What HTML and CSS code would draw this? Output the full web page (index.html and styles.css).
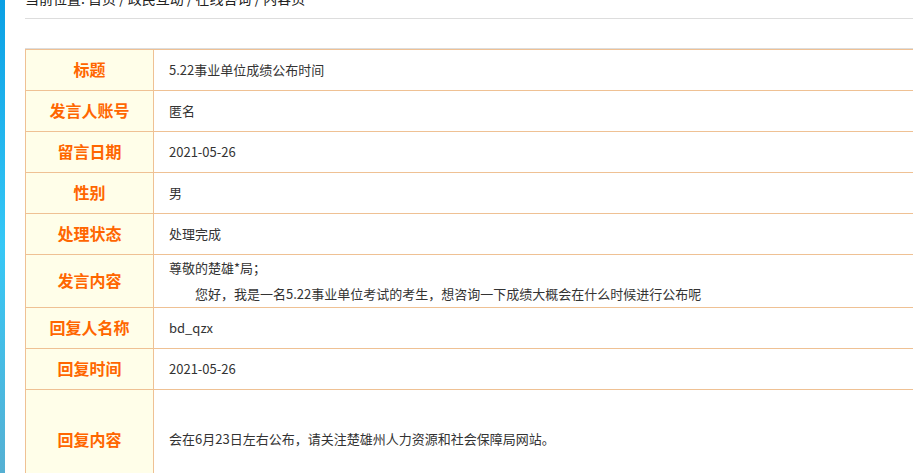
FILE: index.html
```html
<!DOCTYPE html>
<html lang="zh-CN">
<head>
<meta charset="utf-8">
<title>内容页</title>
<link rel="stylesheet" href="styles.css">
</head>
<body>
<div class="page">
  <div class="sidebar"></div>
  <div class="main">
    <div class="crumb">当前位置: 首页 / 政民互动 / 在线咨询 / 内容页</div>
    <div class="content">
      <table class="detail">
        <tr><th>标题</th><td>5.22事业单位成绩公布时间</td></tr>
        <tr><th>发言人账号</th><td>匿名</td></tr>
        <tr><th>留言日期</th><td>2021-05-26</td></tr>
        <tr><th>性别</th><td>男</td></tr>
        <tr><th>处理状态</th><td>处理完成</td></tr>
        <tr><th>发言内容</th><td class="multi"><p>尊敬的楚雄*局；</p><p class="indent">您好，我是一名5.22事业单位考试的考生，想咨询一下成绩大概会在什么时候进行公布呢</p></td></tr>
        <tr><th>回复人名称</th><td>bd_qzx</td></tr>
        <tr><th>回复时间</th><td>2021-05-26</td></tr>
        <tr class="tall"><th>回复内容</th><td>会在6月23日左右公布，请关注楚雄州人力资源和社会保障局网站。</td></tr>
      </table>
    </div>
  </div>
</div>
</body>
</html>
```

FILE: styles.css
```css
html, body {
  margin: 0;
  padding: 0;
  overflow: hidden;
  background: #fff;
}
body {
  font-family: "Noto Sans CJK SC", "Liberation Sans", sans-serif;
  color: #333;
}
.page {
  display: flex;
  width: 1100px;
  min-height: 100vh;
}
.sidebar {
  width: 5px;
  flex: none;
  background: linear-gradient(#0a9fe4, #36c7f6 50%, #58aed0);
}
.main {
  flex: 1;
  padding-left: 20px;
  margin-top: -12px;
}
.crumb {
  font-size: 14px;
  line-height: 20px;
  color: #222;
  padding-bottom: 10px;
  border-bottom: 1px solid #ddd;
}
.content {
  margin-top: 29px;
  border-top: 1px solid #ddd;
}
.detail {
  width: 100%;
  border-collapse: collapse;
}
.detail th,
.detail td {
  border: 1px solid #efc194;
  height: 38px;
  padding: 0 0 2px;
  vertical-align: middle;
}
.detail th {
  width: 127px;
  background: #fffee9;
  color: #ff6600;
  font-size: 16px;
  font-weight: bold;
  text-align: center;
}
.detail td {
  padding: 0 15px 2px;
  font-size: 13px;
  color: #333;
  text-align: left;
}
.detail td.multi {
  height: 52px;
  padding-bottom: 0;
}
.detail td.multi p {
  margin: 0;
  line-height: 26px;
}
.detail td.multi p.indent {
  text-indent: 2em;
}
.detail tr.tall th,
.detail tr.tall td {
  height: 97px;
}
```
